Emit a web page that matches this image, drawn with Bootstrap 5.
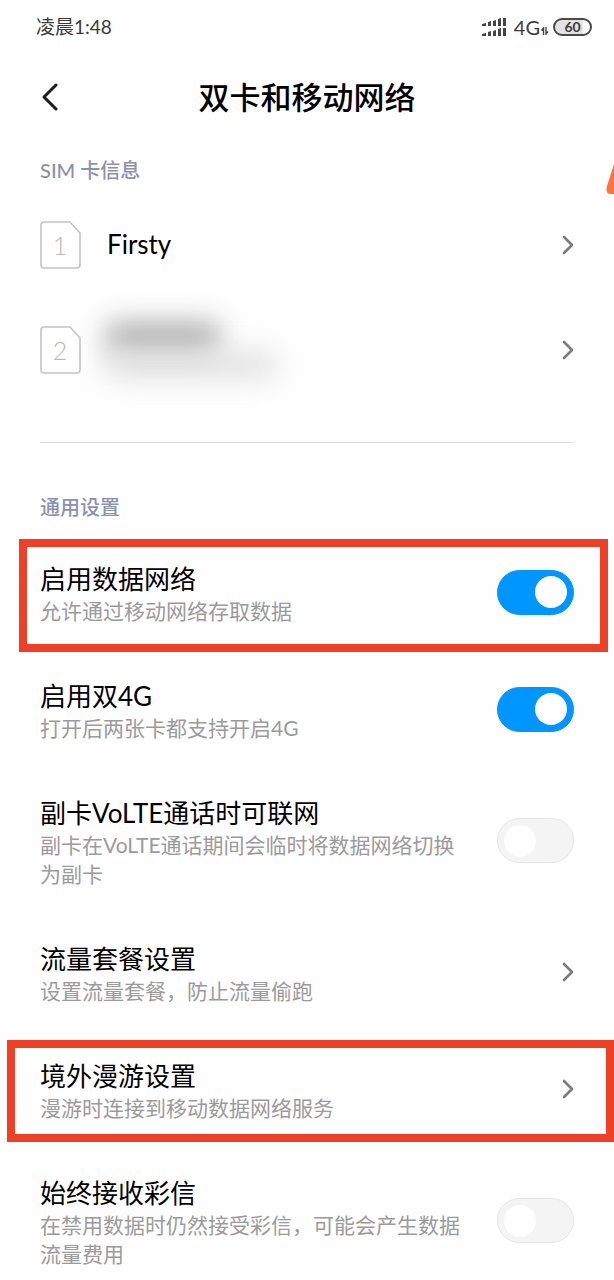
<!DOCTYPE html>
<html lang="zh-CN">
<head>
<meta charset="utf-8">
<meta name="viewport" content="width=device-width, initial-scale=1">
<title>双卡和移动网络</title>
<link rel="stylesheet" href="https://cdn.jsdelivr.net/npm/bootstrap@5.3.0/dist/css/bootstrap.min.css">
<style>
  body { font-family: Lato, "Noto Sans CJK SC", sans-serif; color: #000; background: #fefefe; overflow-x: hidden; }
  .gutter { padding-left: 40px; padding-right: 40px; }
  .status-bar { height: 54px; padding: 0 22px 0 36px; font-size: 19px; color: #3c3c3c; }
  .status-net { font-size: 20px; line-height: 20px; }
  .battery { width: 39px; height: 18px; border: 2px solid #4a4a4a; font-size: 14px; line-height: 14px; font-weight: 700;
    background: linear-gradient(to right, #e2e2e2 80%, #fefefe 80%); }
  .title-bar { height: 86px; display: grid; grid-template-columns: 40px 1fr 40px; align-items: center; }
  .title-bar h1 { font-size: 31px; line-height: 40px; font-weight: 500; }
  .section-label { font-size: 20px; line-height: 30px; font-weight: 500; color: #8a91ae; margin: 0; }
  .sim-label { padding-top: 15px; padding-bottom: 7px; }
  .general-label { padding-top: 49px; padding-bottom: 12px; }
  .sim-row { height: 105px; gap: 26px; }
  .sim-name, .row-title { font-size: 26px; line-height: 35px; }
  .sim-icon text { font-family: Lato, sans-serif; font-size: 25px; font-weight: 300; fill: #b9b9b9; }
  .divider { margin: 40px 40px 0; border-top: 1px solid #dedede; }
  .set-row { position: relative; padding-top: 25px; padding-bottom: 26px; gap: 36px; }
  .row-title { line-height: 33px; }
  .row-note { font-size: 21px; line-height: 29px; color: #9b9b9b; }
  .last-row { padding-bottom: 8px; }
  .marked::after { content: ""; position: absolute; border: 8px solid #ee4027; pointer-events: none; }
  .mark-data::after { inset: 5px 6px -1px 19px; }
  .mark-roam::after { inset: 9px 0 6px 7px; }
  .form-check-input.toggle { width: 77px; height: 45px; margin: 0; border: 1px solid #e6e6e6; border-radius: 23px; background-color: #f4f4f4;
    background-repeat: no-repeat; background-size: 32px 32px; background-position: 6px center; flex: none;
    background-image: url("data:image/svg+xml,%3Csvg xmlns='http://www.w3.org/2000/svg' viewBox='0 0 32 32'%3E%3Ccircle cx='16' cy='16' r='16' fill='%23fff'/%3E%3C/svg%3E"); }
  .form-check-input.toggle:checked { background-color: #0096ff; border-color: #0096ff; background-position: 37px center;
    background-image: url("data:image/svg+xml,%3Csvg xmlns='http://www.w3.org/2000/svg' viewBox='0 0 32 32'%3E%3Ccircle cx='16' cy='16' r='16' fill='%23fff'/%3E%3C/svg%3E"); }
  .hidden-name { width: 112px; height: 30px; background: #aaa; filter: blur(14px); }
  .hidden-number { width: 168px; height: 24px; background: #dedede; filter: blur(14px); }
  .side-tab { position: absolute; right: 0; top: 164px; }
</style>
</head>
<body>
<div class="position-relative">
  <header>
    <div class="status-bar d-flex align-items-center justify-content-between">
      <span>凌晨1:48</span>
      <div class="d-flex align-items-center">
        <svg class="me-2" width="24" height="18" viewBox="0 0 24 18" fill="#444" aria-hidden="true">
          <path d="M0 6l4-1v3H0zM6 4l3-1v5H6zM11 3l3-1v6h-3zM16 1l3-1v8h-3zM21 0h3v8h-3zM0 16l4-1v3H0zM6 14l3-1v5H6zM11 13l3-1v6h-3zM16 11l3-1v8h-3zM21 10h3v8h-3z"/>
        </svg>
        <span class="status-net">4G</span>
        <svg class="mt-2" width="9" height="8" viewBox="0 0 9 8" fill="none" stroke="#444" stroke-width="1.4" aria-hidden="true">
          <path d="M3.5 8V1L1.5 3.5M6 0v7l2-2.5"/>
        </svg>
        <span class="battery rounded-pill text-center ms-1">60</span>
      </div>
    </div>
    <div class="title-bar gutter">
      <button type="button" class="btn p-0 border-0 d-flex" aria-label="返回">
        <svg width="20" height="28" viewBox="0 0 20 28" fill="none" stroke="#1c1c1c" stroke-width="3" stroke-linecap="round" stroke-linejoin="round" aria-hidden="true"><path d="M16 2L4 14l12 12"/></svg>
      </button>
      <h1 class="text-center text-nowrap m-0">双卡和移动网络</h1>
    </div>
  </header>

  <svg class="side-tab" width="8" height="31" viewBox="0 0 8 31" aria-hidden="true"><path d="M8 0L1 22Q-1 30 5 30H8z" fill="#f9743f"/></svg>

  <main>
    <section>
      <h2 class="section-label sim-label gutter">SIM 卡信息</h2>
      <a href="#sim1" class="sim-row gutter d-flex align-items-center text-reset text-decoration-none">
        <svg class="sim-icon flex-shrink-0" width="41" height="48" viewBox="0 0 41 48" aria-hidden="true"><path d="M4 1H30L40 12V44Q40 47 37 47H4Q1 47 1 44V4Q1 1 4 1z" fill="none" stroke="#c4c4c4" stroke-width="1.6"/><text x="20" y="34" text-anchor="middle">1</text></svg>
        <span class="sim-name flex-grow-1">Firsty</span>
        <svg width="12" height="20" viewBox="0 0 12 20" fill="none" stroke="#7c7c7c" stroke-width="2.6" stroke-linecap="round" stroke-linejoin="round" aria-hidden="true"><path d="M2 2l8 8-8 8"/></svg>
      </a>
      <a href="#sim2" class="sim-row gutter d-flex align-items-center text-reset text-decoration-none" aria-label="SIM 2">
        <svg class="sim-icon flex-shrink-0" width="41" height="48" viewBox="0 0 41 48" aria-hidden="true"><path d="M4 1H30L40 12V44Q40 47 37 47H4Q1 47 1 44V4Q1 1 4 1z" fill="none" stroke="#c4c4c4" stroke-width="1.6"/><text x="20" y="34" text-anchor="middle">2</text></svg>
        <span class="flex-grow-1">
          <span class="hidden-name d-block"></span>
          <span class="hidden-number d-block"></span>
        </span>
        <svg width="12" height="20" viewBox="0 0 12 20" fill="none" stroke="#7c7c7c" stroke-width="2.6" stroke-linecap="round" stroke-linejoin="round" aria-hidden="true"><path d="M2 2l8 8-8 8"/></svg>
      </a>
    </section>

    <div class="divider"></div>

    <section>
      <h2 class="section-label general-label gutter">通用设置</h2>

      <div class="set-row gutter marked mark-data d-flex align-items-center justify-content-between">
        <label for="data" class="pt-1"><span class="row-title d-block">启用数据网络</span><span class="row-note d-block">允许通过移动网络存取数据</span></label>
        <input class="form-check-input toggle" type="checkbox" role="switch" id="data" checked>
      </div>

      <div class="set-row gutter d-flex align-items-center justify-content-between">
        <label for="dual" class="pt-1"><span class="row-title d-block">启用双4G</span><span class="row-note d-block">打开后两张卡都支持开启4G</span></label>
        <input class="form-check-input toggle" type="checkbox" role="switch" id="dual" checked>
      </div>

      <div class="set-row gutter d-flex align-items-center justify-content-between">
        <label for="volte" class="pt-1"><span class="row-title d-block">副卡VoLTE通话时可联网</span><span class="row-note d-block">副卡在VoLTE通话期间会临时将数据网络切换为副卡</span></label>
        <input class="form-check-input toggle" type="checkbox" role="switch" id="volte">
      </div>

      <a href="#plan" class="set-row gutter d-flex align-items-center justify-content-between text-reset text-decoration-none">
        <span class="pt-1"><span class="row-title d-block">流量套餐设置</span><span class="row-note d-block">设置流量套餐，防止流量偷跑</span></span>
        <svg width="12" height="20" viewBox="0 0 12 20" fill="none" stroke="#7c7c7c" stroke-width="2.6" stroke-linecap="round" stroke-linejoin="round" aria-hidden="true"><path d="M2 2l8 8-8 8"/></svg>
      </a>

      <a href="#roaming" class="set-row gutter marked mark-roam d-flex align-items-center justify-content-between text-reset text-decoration-none">
        <span class="pt-1"><span class="row-title d-block">境外漫游设置</span><span class="row-note d-block">漫游时连接到移动数据网络服务</span></span>
        <svg width="12" height="20" viewBox="0 0 12 20" fill="none" stroke="#7c7c7c" stroke-width="2.6" stroke-linecap="round" stroke-linejoin="round" aria-hidden="true"><path d="M2 2l8 8-8 8"/></svg>
      </a>

      <div class="set-row last-row gutter d-flex align-items-center justify-content-between">
        <label for="mms" class="pt-1"><span class="row-title d-block">始终接收彩信</span><span class="row-note d-block">在禁用数据时仍然接受彩信，可能会产生数据流量费用</span></label>
        <input class="form-check-input toggle" type="checkbox" role="switch" id="mms">
      </div>
    </section>
  </main>
</div>
<script src="https://cdn.jsdelivr.net/npm/bootstrap@5.3.0/dist/js/bootstrap.bundle.min.js"></script>
</body>
</html>
